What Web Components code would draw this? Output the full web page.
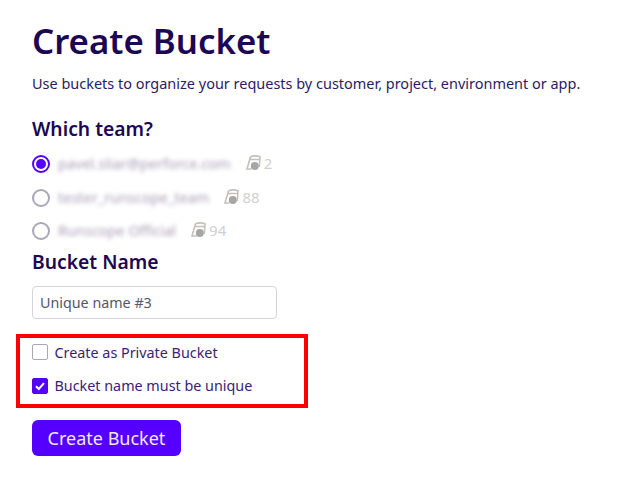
<!DOCTYPE html>
<html>
<head>
<meta charset="utf-8">
<title>Create Bucket</title>
<style>
html,body{margin:0;padding:0;background:#fff;}
body{font-family:"Noto Sans",sans-serif;color:#1f0b5c;}
</style>
</head>
<body>
<create-bucket-page>
  <team-option slot="teams" checked count="2">pavel.sliar@perforce.com</team-option>
  <team-option slot="teams" count="88">tester_runscope_team</team-option>
  <team-option slot="teams" count="94">Runscope Official</team-option>
</create-bucket-page>

<template id="page-tpl">
<style>
:host{display:block;position:relative;width:624px;height:488px;box-sizing:border-box;padding:19px 0 0 32px;color:#1f0b5c;}
h1{margin:0;font-size:34.8px;line-height:44px;font-weight:600;color:#1d0652;}
p{margin:11px 0 0;font-size:14.47px;line-height:20px;color:#2c1a63;}
h2{margin:0;font-size:19.3px;line-height:27px;font-weight:600;color:#1d0652;}
.team-title{margin-top:21px;}
.teams{display:flex;flex-direction:column;gap:13.5px;margin-top:11px;}
.name-title{margin-top:8px;}
input{display:block;box-sizing:border-box;width:245px;height:33px;margin-top:11px;padding:0 7px;border:1px solid #d4d4da;border-radius:4px;font:14.3px "Noto Sans",sans-serif;color:#55556a;outline:none;background:#fff;}
.checks{display:flex;flex-direction:column;gap:13.5px;margin-top:23px;}
button{display:block;width:149px;height:36px;margin-top:24.5px;border:0;border-radius:6px;background:#5500ff;color:#f1eaff;font:18px "Noto Sans",sans-serif;padding:0;}
.highlight{position:absolute;left:16px;top:334px;width:292px;height:74px;box-sizing:border-box;border:4px solid #fe0000;}
</style>
<h1>Create Bucket</h1>
<p>Use buckets to organize your requests by customer, project, environment or app.</p>
<h2 class="team-title">Which team?</h2>
<div class="teams"><slot name="teams"></slot></div>
<h2 class="name-title">Bucket Name</h2>
<input type="text" value="Unique name #3">
<div class="checks">
  <check-row>Create as Private Bucket</check-row>
  <check-row checked>Bucket name must be unique</check-row>
</div>
<button type="button">Create Bucket</button>
<div class="highlight"></div>
</template>

<template id="team-tpl">
<style>
:host{display:flex;align-items:center;height:20px;font-size:15px;}
.radio{box-sizing:border-box;width:18px;height:18px;border-radius:50%;border:2px solid #a9a7b8;background:#fff;flex:none;margin-top:2px;position:relative;}
:host([checked]) .radio{border-color:#5500ff;}
:host([checked]) .radio::after{content:"";position:absolute;left:2px;top:2px;width:10px;height:10px;border-radius:50%;background:#5500ff;}
.name{margin-left:8px;font-size:14.5px;color:#6b5a84;filter:blur(2px);opacity:.6;white-space:nowrap;}
.meta{display:flex;align-items:center;margin-left:15px;color:#d0d0d0;}
svg{width:16px;height:16px;flex:none;margin-right:2px;filter:blur(.4px);}
</style>
<span class="radio"></span>
<span class="name"><slot></slot></span>
<span class="meta">
  <svg viewBox="0 0 16 16"><path d="M4.500 1.800c2.500-1 7-1 9.500 0L13.300 12M4.500 1.800 1 14h4.500M4.500 4.500h9" fill="none" stroke="#c8bfb8" stroke-width="1.600"/><circle cx="8.800" cy="11" r="4" fill="#a6a6a6"/></svg>
  <span class="count"></span>
</span>
</template>

<template id="check-tpl">
<style>
:host{display:flex;align-items:center;height:20px;font-size:14.35px;color:#3a2273;}
.box{box-sizing:border-box;width:16px;height:16px;border:1px solid #a9a7b8;border-radius:2px;background:#fff;flex:none;margin-right:6.500px;display:flex;align-items:center;justify-content:center;}
:host([checked]) .box{background:#5500ff;border-color:#5500ff;}
svg{display:none;width:12px;height:12px;}
:host([checked]) svg{display:block;}
</style>
<span class="box"><svg viewBox="0 0 12 12"><path d="M2 6.200 4.800 9 10 3.200" fill="none" stroke="#fff" stroke-width="2"/></svg></span>
<span><slot></slot></span>
</template>

<script>
class CheckRow extends HTMLElement{
  constructor(){
    super();
    this.attachShadow({mode:'open'});
    this.shadowRoot.appendChild(document.getElementById('check-tpl').content.cloneNode(true));
  }
}
class TeamOption extends HTMLElement{
  constructor(){
    super();
    this.attachShadow({mode:'open'});
    this.shadowRoot.appendChild(document.getElementById('team-tpl').content.cloneNode(true));
  }
  connectedCallback(){
    this.shadowRoot.querySelector('.count').textContent = this.getAttribute('count');
  }
}
class CreateBucketPage extends HTMLElement{
  constructor(){
    super();
    this.attachShadow({mode:'open'});
    this.shadowRoot.appendChild(document.getElementById('page-tpl').content.cloneNode(true));
  }
}
customElements.define('check-row',CheckRow);
customElements.define('team-option',TeamOption);
customElements.define('create-bucket-page',CreateBucketPage);
</script>
</body>
</html>
